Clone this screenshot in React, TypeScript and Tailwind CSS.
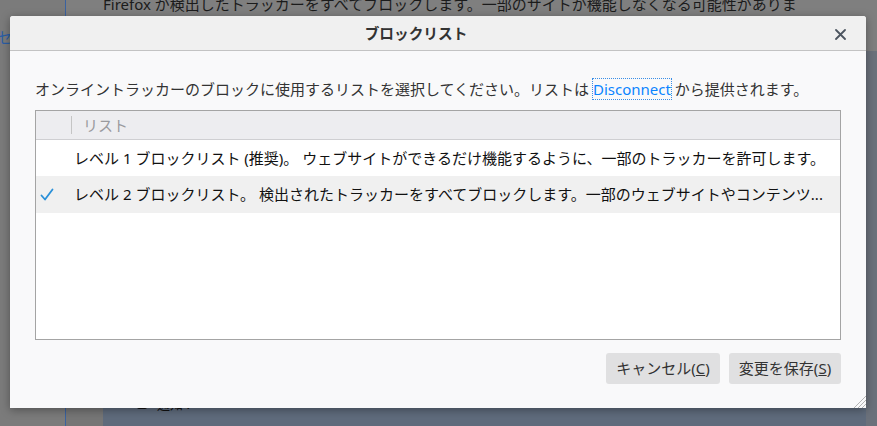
import React from "react";

const font = "font-['Noto_Sans','Noto_Sans_CJK_JP',sans-serif]";

function CheckIcon() {
  return (
    <svg width="14" height="14" viewBox="0 0 14 14" fill="none">
      <path d="M1.5 7.5 L5 11.5 L12.5 1.5" stroke="#2a90d8" strokeWidth="1.8" strokeLinecap="round" strokeLinejoin="round" />
    </svg>
  );
}

function CloseIcon() {
  return (
    <svg width="11" height="11" viewBox="0 0 11 11">
      <path d="M1 1 L10 10 M10 1 L1 10" stroke="#4c5560" strokeWidth="1.8" strokeLinecap="round" />
    </svg>
  );
}

function Grip() {
  return (
    <svg width="14" height="14" viewBox="0 0 14 14">
      <path d="M14 2 L2 14 M14 6 L6 14 M14 10 L10 14" stroke="#b4b4b4" strokeWidth="1" />
    </svg>
  );
}

export default function App() {
  return (
    <div className={`relative w-[877px] h-[426px] overflow-hidden bg-[#7f7f7f] ${font}`}>
      {/* Page behind the overlay */}
      <div className="flex h-full">
        <div className="w-[66px] shrink-0 bg-[#7b7b7b] border-r border-[#3a62a0] pt-[26px]">
          <span className="block -ml-[3px] text-[15px] text-[#2b5ea6]">セ</span>
        </div>
        <div className="flex-1 flex flex-col">
          <p className="pl-[37px] -mt-[6px] text-[15px] leading-[20px] text-[#1b1b1b] whitespace-nowrap">
            Firefox が検出したトラッカーをすべてブロックします。一部のサイトが機能しなくなる可能性がありま
          </p>
          <div className="mt-[37px] flex-1 flex">
            <div className="w-[37px] bg-[#767676]" />
            <div className="flex-1 bg-[#5f6b7c] flex flex-col justify-end pb-[12px] pl-[34px]">
              <div className="flex items-center gap-[10px] text-[13px] text-[#111]">
                <span className="w-[10px] h-[10px] bg-[#111] rounded-[2px]" />
                <span>通知 :</span>
              </div>
            </div>
            <div className="w-[11px] bg-[#6b717b]" />
          </div>
        </div>
      </div>

      {/* Dialog */}
      <div className="absolute left-[10px] top-[16px] w-[856px] h-[392px] flex flex-col bg-[#f9f9fa] rounded-t-[3px] shadow-[0_2px_10px_rgba(0,0,0,0.35)]">
        <div className="relative h-[35px] shrink-0 flex items-center justify-center pr-[44px] bg-[#f0f0f0] border-b border-[#c3c3c3] rounded-t-[3px]">
          <span className="text-[14.67px] font-bold text-[#333]">ブロックリスト</span>
          <button className="absolute right-[20px] top-[13px]">
            <CloseIcon />
          </button>
        </div>

        <div className="flex-1 flex flex-col px-[25px] pt-[28px] pb-[24px]">
          <p className="text-[15px] leading-[20px] text-[#333] whitespace-nowrap">
            オンライントラッカーのブロックに使用するリストを選択してください。リストは{" "}
            <span className="text-[#0a84ff] outline outline-1 outline-dotted outline-[#3a8ee6]">Disconnect</span>{" "}
            から提供されます。
          </p>

          <div className="mt-[11px] h-[230px] flex flex-col bg-white border border-[#a4a4a4]">
            <div className="h-[29px] shrink-0 flex items-center bg-[#ededf0] border-b border-[#cfcfd2]">
              <span className="ml-[35px] h-[18px] border-l border-[#c5c5c5]" />
              <span className="ml-[11px] text-[15px] text-[#9a9a9e]">リスト</span>
            </div>
            <div className="h-[36px] flex items-center pl-[38px] text-[15px] text-[#111] whitespace-nowrap">
              レベル 1 ブロックリスト (推奨)。 ウェブサイトができるだけ機能するように、一部のトラッカーを許可します。
            </div>
            <div className="h-[37px] flex items-center bg-[#f0f0f0] text-[15px] text-[#111]">
              <span className="w-[38px] pl-[4px]">
                <CheckIcon />
              </span>
              <span className="whitespace-nowrap">
                レベル 2 ブロックリスト。 検出されたトラッカーをすべてブロックします。一部のウェブサイトやコンテンツ...
              </span>
            </div>
          </div>

          <div className="mt-auto flex justify-end gap-[9px]">
            <button className="w-[114px] h-[31px] rounded-[3px] bg-[#e0e0e1] text-[15px] text-[#333]">
              キャンセル(<span className="underline">C</span>)
            </button>
            <button className="w-[112px] h-[31px] rounded-[3px] bg-[#e0e0e1] text-[15px] text-[#333]">
              変更を保存(<span className="underline">S</span>)
            </button>
          </div>
        </div>

        <div className="absolute right-0 bottom-0">
          <Grip />
        </div>
      </div>
    </div>
  );
}
